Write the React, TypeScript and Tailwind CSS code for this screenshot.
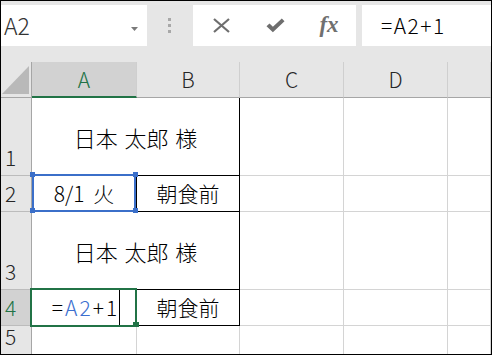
const FONT = '"Noto Sans CJK JP", "Noto Sans", sans-serif';

function RowHead({ n, active }: { n: number; active?: boolean }) {
  return (
    <div
      className={
        'flex items-end border-r border-b border-r-[#a6a6a6] border-b-[#bcbcbc] pb-[3px] pl-[4px] text-[21px] leading-none ' +
        (active ? 'bg-[#d2d2d2] text-[#217346]' : 'bg-[#e6e6e6] text-[#262626]')
      }
    >
      <span className="pb-[4px]">{n}</span>
    </div>
  );
}

function ColHead({ label, active }: { label: string; active?: boolean }) {
  return (
    <div
      className={
        'flex items-center justify-center border-r border-b border-r-[#cfcfcf] text-[21px] leading-none ' +
        (active
          ? 'bg-[#d2d2d2] text-[#217346] border-b-2 border-b-[#217346]'
          : 'bg-[#e6e6e6] text-[#262626] border-b-[#a6a6a6]')
      }
    >
      {label}
    </div>
  );
}

function Cell({ className = '', children }: { className?: string; children?: React.ReactNode }) {
  return (
    <div className={'flex items-center justify-center border-r border-b border-[#d4d4d4] bg-white text-[21px] font-light leading-none text-black ' + className}>
      {children}
    </div>
  );
}

export default function App() {
  return (
    <div className="flex h-[355px] w-[492px] flex-col overflow-hidden border border-black bg-[#e6e6e6] font-light" style={{ fontFamily: FONT }}>
      {/* name box + formula bar */}
      <div className="flex h-[61px] shrink-0 items-start pt-[4px]">
        <div className="relative flex h-[41px] w-[146px] items-center bg-white pl-[3px] text-[23px] text-[#333]">
          A2
          <svg className="absolute right-[9px] top-[22px]" width="7" height="4" viewBox="0 0 7 4">
            <path d="M0 0h7L3.5 4z" fill="#7a7a7a" />
          </svg>
        </div>
        <div className="flex h-[41px] w-[44px] flex-col items-center justify-center gap-[3px]">
          <div className="h-[3px] w-[3px] bg-[#a8a8a8]" />
          <div className="h-[3px] w-[3px] bg-[#a8a8a8]" />
          <div className="h-[3px] w-[3px] bg-[#a8a8a8]" />
        </div>
        <div className="ml-[2px] flex h-[41px] w-[163px] items-center bg-white pl-px">
          <div className="flex w-[54px] justify-center">
            <svg width="17" height="15" viewBox="0 0 17 15">
              <path d="M1 1l15 13M16 1L1 14" stroke="#6e6e6e" strokeWidth="2.2" />
            </svg>
          </div>
          <div className="flex w-[54px] justify-center">
            <svg width="19" height="15" viewBox="0 0 19 15">
              <path d="M0.5 8.2l3-2.8 3.4 3.4L15.8 0.5l2.7 2.7L6.9 14.2z" fill="#6e6e6e" />
            </svg>
          </div>
          <div className="flex w-[54px] justify-center pb-[3px] text-[23px] font-semibold italic leading-none text-[#707070]" style={{ fontFamily: '"Liberation Serif", serif' }}>
            fx
          </div>
        </div>
        <div className="ml-[6px] flex h-[41px] flex-1 items-center bg-white pl-[19px] text-[21px] tracking-[1.5px] text-black">=A2+1</div>
      </div>

      {/* sheet grid */}
      <div className="grid flex-1 grid-cols-[31px_105px_103px_104px_104px_1fr] grid-rows-[36px_78px_36px_78px_36px_1fr]">
        <div className="relative border-r border-b border-r-[#a6a6a6] border-b-[#a6a6a6] bg-[#e6e6e6]">
          <svg className="absolute left-[1px] top-[4px]" width="27" height="28" viewBox="0 0 27 28">
            <path d="M27 0V28H0z" fill="#b9b9b9" />
          </svg>
        </div>
        <ColHead label="A" active />
        <ColHead label="B" />
        <ColHead label="C" />
        <ColHead label="D" />
        <ColHead label="" />

        <RowHead n={1} />
        <Cell className="col-span-2 border-r-black border-b-black text-[22px] [word-spacing:2px]">日本 太郎 様</Cell>
        <Cell />
        <Cell />
        <Cell />

        <RowHead n={2} />
        <Cell className="relative bg-[#e8eef8] border-b-black border-r-black [word-spacing:4px]">
          8/1 火
          <div className="pointer-events-none absolute left-0 top-[-2px] h-[38px] w-[104px] border-2 border-[#3b6fc9]" />
          <div className="absolute left-[-2px] top-[-4px] h-[5px] w-[5px] bg-[#3b6fc9]" />
          <div className="absolute right-[-2px] top-[-4px] h-[5px] w-[5px] bg-[#3b6fc9]" />
          <div className="absolute left-[-2px] bottom-[-2px] h-[5px] w-[5px] bg-[#3b6fc9]" />
          <div className="absolute right-[-2px] bottom-[-2px] h-[5px] w-[5px] bg-[#3b6fc9]" />
        </Cell>
        <Cell className="border-b-black border-r-black">朝食前</Cell>
        <Cell />
        <Cell />
        <Cell />

        <RowHead n={3} />
        <Cell className="col-span-2 border-r-black border-b-black text-[22px] [word-spacing:2px]">日本 太郎 様</Cell>
        <Cell />
        <Cell />
        <Cell />

        <RowHead n={4} active />
        <Cell className="relative border-b-black border-r-black">
          <div className="flex h-full items-center pl-[4px]">
            <span className="tracking-[2px]">
              =<span className="text-[#3c6fcf]">A2</span>+1
            </span>
            <span className="h-full w-px bg-black" />
          </div>
          <div className="pointer-events-none absolute left-[-2px] top-[-2px] h-[39px] w-[107px] border-2 border-[#217346]" />
          <div className="absolute right-[-3px] bottom-[-2px] h-[5px] w-[6px] bg-[#217346]" />
        </Cell>
        <Cell className="border-b-black border-r-black">朝食前</Cell>
        <Cell />
        <Cell />
        <Cell />

        <RowHead n={5} />
        <Cell />
        <Cell />
        <Cell />
        <Cell />
        <Cell />
      </div>
    </div>
  );
}
